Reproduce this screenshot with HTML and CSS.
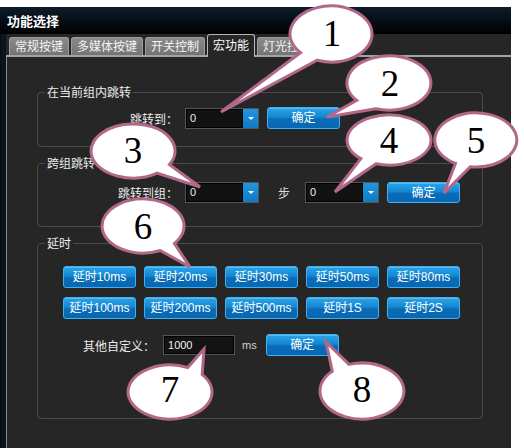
FILE: index.html
```html
<!DOCTYPE html>
<html lang="zh-CN">
<head>
<meta charset="utf-8">
<title>功能选择</title>
<link rel="stylesheet" href="styles.css">
</head>
<body>
<div class="window">
  <div class="titlebar">功能选择</div>
  <div class="frame">
    <div class="main">
      <div class="tabs">
        <div class="tab">常规按键</div>
        <div class="tab">多媒体按键</div>
        <div class="tab">开关控制</div>
        <div class="tab active">宏功能</div>
        <div class="tab">灯光控制</div>
      </div>
      <div class="panel">
        <fieldset class="group g1">
          <legend>在当前组内跳转</legend>
          <div class="row r1">
            <span class="lbl">跳转到：</span>
            <div class="combo"><span class="val">0</span><span class="drop"><i></i></span></div>
            <button class="btn">确定</button>
          </div>
        </fieldset>
        <fieldset class="group g2">
          <legend>跨组跳转</legend>
          <div class="row r2">
            <span class="lbl">跳转到组：</span>
            <div class="combo"><span class="val">0</span><span class="drop"><i></i></span></div>
            <span class="step">步</span>
            <div class="combo"><span class="val">0</span><span class="drop"><i></i></span></div>
            <button class="btn">确定</button>
          </div>
        </fieldset>
        <fieldset class="group g3">
          <legend>延时</legend>
          <div class="delays">
            <button class="btn">延时10ms</button>
            <button class="btn">延时20ms</button>
            <button class="btn">延时30ms</button>
            <button class="btn">延时50ms</button>
            <button class="btn">延时80ms</button>
            <button class="btn">延时100ms</button>
            <button class="btn">延时200ms</button>
            <button class="btn">延时500ms</button>
            <button class="btn">延时1S</button>
            <button class="btn">延时2S</button>
          </div>
          <div class="row r3">
            <span class="lbl">其他自定义：</span>
            <div class="input">1000</div>
            <span class="unit">ms</span>
            <button class="btn">确定</button>
          </div>
        </fieldset>
      </div>
    </div>
  </div>
</div>

<svg class="callouts" width="524" height="448" viewBox="0 0 524 448">
  <path class="bubble" d="M317.0 60.3 L221 112 L300.5 52.7 A41 28 0 1 1 317.0 60.3 Z"/>
  <text class="num" x="332" y="46">1</text>

  <path class="bubble" d="M376.0 108.7 L327 117 L356.8 100.4 A42 27 0 1 1 376.0 108.7 Z"/>
  <text class="num" x="390" y="96">2</text>

  <path class="bubble" d="M169.4 164.5 L200 187 L157.1 173.1 A42 27 0 1 1 169.4 164.5 Z"/>
  <text class="num" x="133" y="163">3</text>

  <path class="bubble" d="M376.0 163.8 L335 192 L360.9 158.6 A42 25 0 1 1 376.0 163.8 Z"/>
  <text class="num" x="389" y="153">4</text>

  <path class="bubble" d="M470.3 166.7 L444 193 L455.5 163.4 A41 27 0 1 1 470.3 166.7 Z"/>
  <text class="num" x="476" y="153">5</text>

  <path class="bubble" d="M174.4 243.4 L190 267 L160.3 250.5 A41 27 0 1 1 174.4 243.4 Z"/>
  <text class="num" x="143" y="239">6</text>

  <path class="bubble" d="M187.8 367.5 L204 349 L202.2 374.6 A42 27 0 1 1 187.8 367.5 Z"/>
  <text class="num" x="170" y="402">7</text>

  <path class="bubble" d="M332.3 371.2 L326 342 L349.0 364.4 A42 28 0 1 1 332.3 371.2 Z"/>
  <text class="num" x="362" y="402">8</text>
</svg>
</body>
</html>
```

FILE: styles.css
```css
* { box-sizing: border-box; }

html, body {
  margin: 0;
  padding: 0;
  background: #ffffff;
}

body {
  position: relative;
  width: 524px;
  height: 448px;
  overflow: hidden;
  font-family: "Liberation Sans", "Noto Sans CJK SC", sans-serif;
  font-size: 12px;
  color: #e8e8e8;
}

.window {
  margin-top: 7px;
  width: 511px;
  height: 441px;
  background: linear-gradient(90deg, #05090d 0, #0b1720 2px, #08121a 6px);
  display: flex;
  flex-direction: column;
}

.titlebar {
  height: 27px;
  padding-left: 7px;
  line-height: 27px;
  font-size: 13px;
  font-weight: bold;
  color: #ffffff;
  background: linear-gradient(#0c1d2a, #03080c 70%, #000000);
  font-family: "Noto Sans CJK SC", sans-serif;
}

.frame {
  flex: 1;
  display: flex;
  padding-left: 6px;
}

.main {
  flex: 1;
  background: #262626;
  display: flex;
  flex-direction: column;
}

.tabs {
  height: 23px;
  display: flex;
  align-items: flex-end;
  gap: 2px;
  padding-left: 3px;
  border-bottom: 2px solid #a3a3a3;
}

.tab {
  height: 18px;
  padding: 0 5px;
  background: linear-gradient(#8a8a8a, #747474);
  border: 1px solid #9d9d9d;
  border-bottom: none;
  border-radius: 3px 3px 0 0;
  color: #f4f4f4;
  font-family: "Noto Sans CJK SC", sans-serif;
  font-size: 12px;
  line-height: 16px;
  white-space: nowrap;
}

.tab.active {
  height: 23px;
  margin-bottom: -2px;
  background: #262626;
  border-color: #b8b8b8;
  color: #ffffff;
  line-height: 20px;
  padding: 0 5px;
}

.panel {
  flex: 1;
  border-left: 1px solid #8c8c8c;
  padding: 28px 28px 0 30px;
}

.group {
  margin: 0;
  padding: 0;
  min-width: 0;
  border: 1px solid #4b4b4b;
  border-radius: 4px;
}

.group legend {
  margin-left: 7px;
  padding: 0 2px;
  height: 14px;
  line-height: 14px;
  font-size: 12px;
  color: #ececec;
  font-family: "Noto Sans CJK SC", sans-serif;
}

.g2, .g3 { margin-top: 9px; }

.row {
  display: flex;
  align-items: center;
}

.r1 {
  height: 22px;
  margin-top: 8px;
  margin-bottom: 17px;
  padding-left: 92px;
}

.r2 {
  height: 21px;
  margin-top: 12px;
  margin-bottom: 23px;
  padding-left: 80px;
}

.lbl {
  font-family: "Noto Sans CJK SC", sans-serif;
  font-size: 12px;
  color: #ececec;
  white-space: nowrap;
  margin-right: 7px;
}

.combo {
  width: 74px;
  height: 21px;
  display: flex;
  border: 1px solid #545454;
  background: #121212;
  box-shadow: inset 0 0 0 1px #000;
}

.val {
  flex: 1;
  padding-left: 4px;
  line-height: 19px;
  font-size: 11px;
  color: #e4ecf4;
}

.drop {
  width: 16px;
  border-left: 1px solid #000;
  background: linear-gradient(#1f96df, #0f7bc4);
  display: flex;
  align-items: center;
  justify-content: center;
}

.drop i {
  width: 0;
  height: 0;
  border-left: 3px solid transparent;
  border-right: 3px solid transparent;
  border-top: 3px solid #ffffff;
}

.btn {
  width: 73px;
  height: 22px;
  margin: 0;
  padding: 0;
  border: 1px solid #3fb0f2;
  border-radius: 3px;
  background: linear-gradient(#2aa3e8, #1488d2 45%, #0a6cb8 55%, #0867b2);
  box-shadow: inset 0 1px 0 rgba(255, 255, 255, 0.25);
  color: #ffffff;
  font-family: "Liberation Sans", "Noto Sans CJK SC", sans-serif;
  font-size: 12px;
  line-height: 20px;
  white-space: nowrap;
}

.r1 .btn { margin-left: 8px; }

.r2 .btn { height: 21px; margin-left: 8px; }

.step {
  margin-left: 19px;
  margin-right: 15px;
  font-family: "Noto Sans CJK SC", sans-serif;
  font-size: 12px;
  color: #dcdcdc;
}

.delays {
  display: grid;
  grid-template-columns: repeat(5, 73px);
  grid-auto-rows: 22px;
  column-gap: 8px;
  row-gap: 9px;
  margin-top: 16px;
  padding-left: 25px;
}

.r3 {
  height: 22px;
  margin-top: 15px;
  margin-bottom: 62px;
  padding-left: 45px;
}

.r3 .lbl { margin-right: 8px; }

.input {
  width: 72px;
  height: 20px;
  border: 1px solid #545454;
  background: #131313;
  box-shadow: inset 0 0 0 1px #000;
  padding-left: 4px;
  line-height: 18px;
  font-size: 11px;
  color: #eef2f6;
}

.unit {
  margin-left: 7px;
  margin-right: 9px;
  font-size: 11px;
  color: #cfcfcf;
}

.callouts {
  position: absolute;
  left: 0;
  top: 0;
  pointer-events: none;
}

.bubble {
  fill: #ffffff;
  stroke: #b3688a;
  stroke-width: 3;
  stroke-linejoin: miter;
}

.num {
  font-family: "Liberation Serif", "DejaVu Serif", serif;
  font-size: 37px;
  text-anchor: middle;
  fill: #000000;
}
```
